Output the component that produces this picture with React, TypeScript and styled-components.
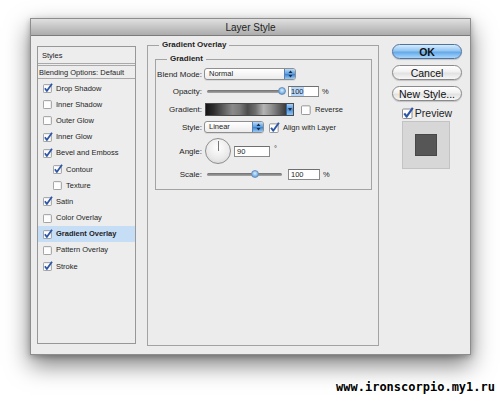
import React from "react";
import styled, { createGlobalStyle } from "styled-components";

const Global = createGlobalStyle`
  html, body { margin: 0; padding: 0; background: #fff; }
  body { font-family: "Liberation Sans", Arial, sans-serif; color: #1e1e1e; }
  * { box-sizing: border-box; }
`;

const Page = styled.div`
  width: 500px;
  height: 395px;
  padding: 18px 0 0 30px;
  overflow: hidden;
`;

const Dialog = styled.div`
  width: 441px;
  height: 337px;
  background: #ececec;
  border: 1px solid #8d8d8d;
  box-shadow: 0 10px 22px rgba(0, 0, 0, 0.5), 0 2px 6px rgba(0, 0, 0, 0.25);
  display: flex;
  flex-direction: column;
`;

const TitleBar = styled.div`
  height: 17px;
  flex: none;
  background: linear-gradient(#e0e0e0, #c0c0c0 60%, #acacac);
  border-bottom: 1px solid #7b7b7b;
  display: flex;
  align-items: center;
  justify-content: center;
  font-size: 10px;
  color: #222;
`;

const Body = styled.div`
  flex: 1;
  display: flex;
  align-items: flex-start;
  padding: 4px 0 0 6px;
`;

const StylesPanel = styled.div`
  width: 99px;
  height: 298px;
  margin-top: 6px;
  border: 1px solid #979797;
  background: #ededed;
  display: flex;
  flex-direction: column;
`;

const PanelHeader = styled.div`
  height: 17px;
  border-bottom: 1px solid #a9a9a9;
  display: flex;
  align-items: center;
  padding-left: 4px;
  font-size: 7.5px;
`;

const BlendingRow = styled.div`
  height: 14px;
  margin-top: 1px;
  border-top: 1px solid #a9a9a9;
  border-bottom: 1px solid #a9a9a9;
  display: flex;
  align-items: center;
  padding-left: 1px;
  font-size: 7.5px;
  margin-bottom: 1px;
`;

const StyleItem = styled.div<{ $indent?: boolean; $active?: boolean }>`
  height: 16.2px;
  display: flex;
  align-items: center;
  gap: 3px;
  padding-left: ${(p) => (p.$indent ? 15 : 5)}px;
  background: ${(p) => (p.$active ? "#c6ddf6" : "transparent")};
  font-size: 7.5px;
  font-weight: ${(p) => (p.$active ? "bold" : "normal")};
`;

const Box = styled.svg`
  flex: none;
  display: block;
`;

function CheckBox({ size, checked }: { size: number; checked?: boolean }) {
  return (
    <Box width={size + 2} height={size + 2} viewBox="0 0 12 12">
      <rect x="0.5" y="2" width="9.5" height="9.5" rx="1" fill="#fdfdfd" stroke="#8c8c8c" />
      {checked && (
        <path d="M2.3 6.3 L4.6 9.6 L10.8 0.8" stroke="#2d55a6" strokeWidth="2.1" fill="none" strokeLinejoin="round" />
      )}
    </Box>
  );
}

const Overlay = styled.fieldset`
  margin: 0 0 0 11px;
  width: 232px;
  height: 306px;
  border: 1px solid #a3a3a3;
  padding: 4px 6px 0 7px;
  min-width: 0;
`;

const Legend = styled.legend<{ $offset: number }>`
  font-size: 8px;
  font-weight: bold;
  line-height: 10px;
  padding: 0 3px;
  margin-left: ${(p) => p.$offset}px;
`;

const GradientGroup = styled.fieldset`
  margin: 0;
  border: 1px solid #a3a3a3;
  padding: 3px 0 8px 0;
  display: flex;
  flex-direction: column;
  gap: 2px;
  min-width: 0;
`;

const Row = styled.div<{ $h: number }>`
  height: ${(p) => p.$h}px;
  display: flex;
  align-items: center;
  font-size: 8px;
`;

const Label = styled.div`
  width: 46px;
  text-align: right;
  margin-right: 3px;
  flex: none;
`;

const Select = styled.div<{ $w: number }>`
  width: ${(p) => p.$w}px;
  height: 12px;
  margin-left: -1px;
  border: 1px solid #8f8f8f;
  border-radius: 3px;
  background: linear-gradient(#ffffff, #ececec);
  display: flex;
  overflow: hidden;
  box-shadow: 0 1px 0 rgba(0, 0, 0, 0.08);
`;

const SelectText = styled.span`
  flex: 1;
  padding-left: 4px;
  line-height: 10px;
  font-size: 7.5px;
`;

const Stepper = styled.span`
  width: 11px;
  border-left: 1px solid #5b80ab;
  background: linear-gradient(#b9dbfa, #5a9de0 50%, #3f86d3 55%, #9ccbf4);
  display: flex;
  align-items: center;
  justify-content: center;
`;

function Arrows() {
  return (
    <svg width="5" height="8" viewBox="0 0 5 8">
      <path d="M2.5 0.5 L4.5 3 L0.5 3 Z" fill="#1c2c44" />
      <path d="M2.5 7.5 L4.5 5 L0.5 5 Z" fill="#1c2c44" />
    </svg>
  );
}

const Track = styled.div`
  position: relative;
  width: 75px;
  height: 3px;
  margin-left: 2px;
  border-radius: 2px;
  background: linear-gradient(#6e6e6e, #a8a8a8);
  flex: none;
`;

const Thumb = styled.span`
  position: absolute;
  top: -2.5px;
  width: 8px;
  height: 8px;
  margin-left: -4px;
  border-radius: 50%;
  border: 1px solid #6a8fba;
  background: radial-gradient(circle at 50% 40%, #dcedfd, #7ab4ea 60%, #4d8ace);
`;

function Slider({ value, min, max }: { value: number; min: number; max: number }) {
  const pct = ((value - min) / (max - min)) * 100;
  return (
    <Track>
      <Thumb style={{ left: `${pct}%` }} />
    </Track>
  );
}

const Input = styled.div<{ $w: number; $ml: number }>`
  width: ${(p) => p.$w}px;
  height: 11px;
  margin-left: ${(p) => p.$ml}px;
  border: 1px solid #8a8a8a;
  border-top-color: #6f6f6f;
  background: #fff;
  font-size: 7.5px;
  line-height: 9px;
  padding-left: 2px;
  flex: none;
`;

const Selected = styled.span`
  background: #b7d6fb;
`;

const Unit = styled.span<{ $ml: number; $up?: boolean }>`
  margin-left: ${(p) => p.$ml}px;
  font-size: 7.5px;
  align-self: ${(p) => (p.$up ? "flex-start" : "center")};
  margin-top: ${(p) => (p.$up ? "7px" : "0")};
`;

const GradBar = styled.div`
  width: 89px;
  height: 13px;
  display: flex;
  border: 1px solid #4a4a4a;
  flex: none;
`;

const GradFill = styled.div`
  flex: 1;
  background: linear-gradient(
    to right,
    #151515 0%,
    #2e2e2e 10%,
    #8a8a8a 33%,
    #7a7a7a 42%,
    #4c4c4c 52%,
    #6e6e6e 62%,
    #b4b4b4 72%,
    #8f8f8f 82%,
    #3a3a3a 100%
  );
`;

const GradDrop = styled.div`
  width: 7px;
  border-left: 1px solid #3b6aa0;
  background: linear-gradient(#a7cff6, #4b92db 50%, #8ec3f1);
  display: flex;
  align-items: center;
  justify-content: center;
`;

const CheckLabel = styled.div<{ $ml: number }>`
  display: flex;
  align-items: center;
  gap: 3px;
  margin-left: ${(p) => p.$ml}px;
  font-size: 7.5px;
`;

const Dial = styled.div`
  position: relative;
  width: 26px;
  height: 26px;
  border-radius: 50%;
  border: 1px solid #8e8e8e;
  background: radial-gradient(circle at 50% 35%, #ffffff, #e9e9e9 60%, #cfcfcf);
  flex: none;
  &::after {
    content: "";
    position: absolute;
    left: 12px;
    top: 2px;
    width: 1px;
    height: 10px;
    background: #777;
  }
`;

const RightColumn = styled.div`
  width: 70px;
  margin: 4px 0 0 13px;
  display: flex;
  flex-direction: column;
  align-items: center;
`;

const Button = styled.div<{ $primary?: boolean; $mt: number }>`
  width: 70px;
  height: 15px;
  margin-top: ${(p) => p.$mt}px;
  border-radius: 8px;
  border: 1px solid ${(p) => (p.$primary ? "#4f73a0" : "#8a8a8a")};
  background: ${(p) =>
    p.$primary
      ? "linear-gradient(#d6ebfd, #93c6f2 45%, #64a9ea 55%, #a9d7fb)"
      : "linear-gradient(#ffffff, #f1f1f1 45%, #e2e2e2 55%, #f7f7f7)"};
  box-shadow: 0 1px 1px rgba(0, 0, 0, 0.18);
  display: flex;
  align-items: center;
  justify-content: center;
  font-size: 10.5px;
  font-weight: ${(p) => (p.$primary ? "bold" : "normal")};
  color: #111;
`;

const PreviewRow = styled.div`
  margin-top: 6px;
  display: flex;
  align-items: center;
  gap: 1px;
  font-size: 10.5px;
`;

const Swatch = styled.div`
  margin-top: 2px;
  margin-left: -2px;
  width: 48px;
  height: 48px;
  background: #d7d7d7;
  border: 1px solid #c3c3c3;
  display: flex;
  align-items: center;
  justify-content: center;
`;

const SwatchInner = styled.div`
  width: 22px;
  height: 22px;
  background: #565656;
  border: 1px solid #474747;
`;

const Watermark = styled.div`
  margin: 26px 5px 0 0;
  text-align: right;
  font-family: "DejaVu Sans Mono", monospace;
  font-weight: bold;
  font-size: 12px;
  line-height: 12px;
  color: #000;
  text-shadow: 1px 0 #fff, -1px 0 #fff, 0 1px #fff, 0 -1px #fff, 1px 1px #fff, -1px -1px #fff;
`;

const items: { name: string; checked: boolean; indent?: boolean; active?: boolean }[] = [
  { name: "Drop Shadow", checked: true },
  { name: "Inner Shadow", checked: false },
  { name: "Outer Glow", checked: false },
  { name: "Inner Glow", checked: true },
  { name: "Bevel and Emboss", checked: true },
  { name: "Contour", checked: true, indent: true },
  { name: "Texture", checked: false, indent: true },
  { name: "Satin", checked: true },
  { name: "Color Overlay", checked: false },
  { name: "Gradient Overlay", checked: true, active: true },
  { name: "Pattern Overlay", checked: false },
  { name: "Stroke", checked: true },
];

export default function App() {
  return (
    <Page>
      <Global />
      <Dialog>
        <TitleBar>Layer Style</TitleBar>
        <Body>
          <StylesPanel>
            <PanelHeader>Styles</PanelHeader>
            <BlendingRow>Blending Options: Default</BlendingRow>
            {items.map((it) => (
              <StyleItem key={it.name} $indent={it.indent} $active={it.active}>
                <CheckBox size={8} checked={it.checked} />
                <span>{it.name}</span>
              </StyleItem>
            ))}
          </StylesPanel>

          <Overlay>
            <Legend $offset={4}>Gradient Overlay</Legend>
            <GradientGroup>
              <Legend $offset={11}>Gradient</Legend>
              <Row $h={14}>
                <Label>Blend Mode:</Label>
                <Select $w={92}>
                  <SelectText>Normal</SelectText>
                  <Stepper>
                    <Arrows />
                  </Stepper>
                </Select>
              </Row>
              <Row $h={16}>
                <Label>Opacity:</Label>
                <Slider value={100} min={0} max={100} />
                <Input $w={31} $ml={6}>
                  <Selected>100</Selected>
                </Input>
                <Unit $ml={3}>%</Unit>
              </Row>
              <Row $h={16}>
                <Label>Gradient:</Label>
                <GradBar>
                  <GradFill />
                  <GradDrop>
                    <svg width="4" height="3" viewBox="0 0 4 3">
                      <path d="M0 0 L4 0 L2 3 Z" fill="#1c2c44" />
                    </svg>
                  </GradDrop>
                </GradBar>
                <CheckLabel $ml={7}>
                  <CheckBox size={9} />
                  <span>Reverse</span>
                </CheckLabel>
              </Row>
              <Row $h={16}>
                <Label>Style:</Label>
                <Select $w={60}>
                  <SelectText>Linear</SelectText>
                  <Stepper>
                    <Arrows />
                  </Stepper>
                </Select>
                <CheckLabel $ml={5}>
                  <CheckBox size={9} checked />
                  <span>Align with Layer</span>
                </CheckLabel>
              </Row>
              <Row $h={28}>
                <Label>Angle:</Label>
                <Dial />
                <Input $w={36} $ml={3}>90</Input>
                <Unit $ml={4} $up>
                  °
                </Unit>
              </Row>
              <Row $h={14}>
                <Label>Scale:</Label>
                <Slider value={100} min={10} max={150} />
                <Input $w={32} $ml={6}>100</Input>
                <Unit $ml={3}>%</Unit>
              </Row>
            </GradientGroup>
          </Overlay>

          <RightColumn>
            <Button $primary $mt={0}>
              OK
            </Button>
            <Button $mt={6}>Cancel</Button>
            <Button $mt={6}>New Style...</Button>
            <PreviewRow>
              <CheckBox size={10} checked />
              <span>Preview</span>
            </PreviewRow>
            <Swatch>
              <SwatchInner />
            </Swatch>
          </RightColumn>
        </Body>
      </Dialog>
      <Watermark>www.ironscorpio.my1.ru</Watermark>
    </Page>
  );
}
